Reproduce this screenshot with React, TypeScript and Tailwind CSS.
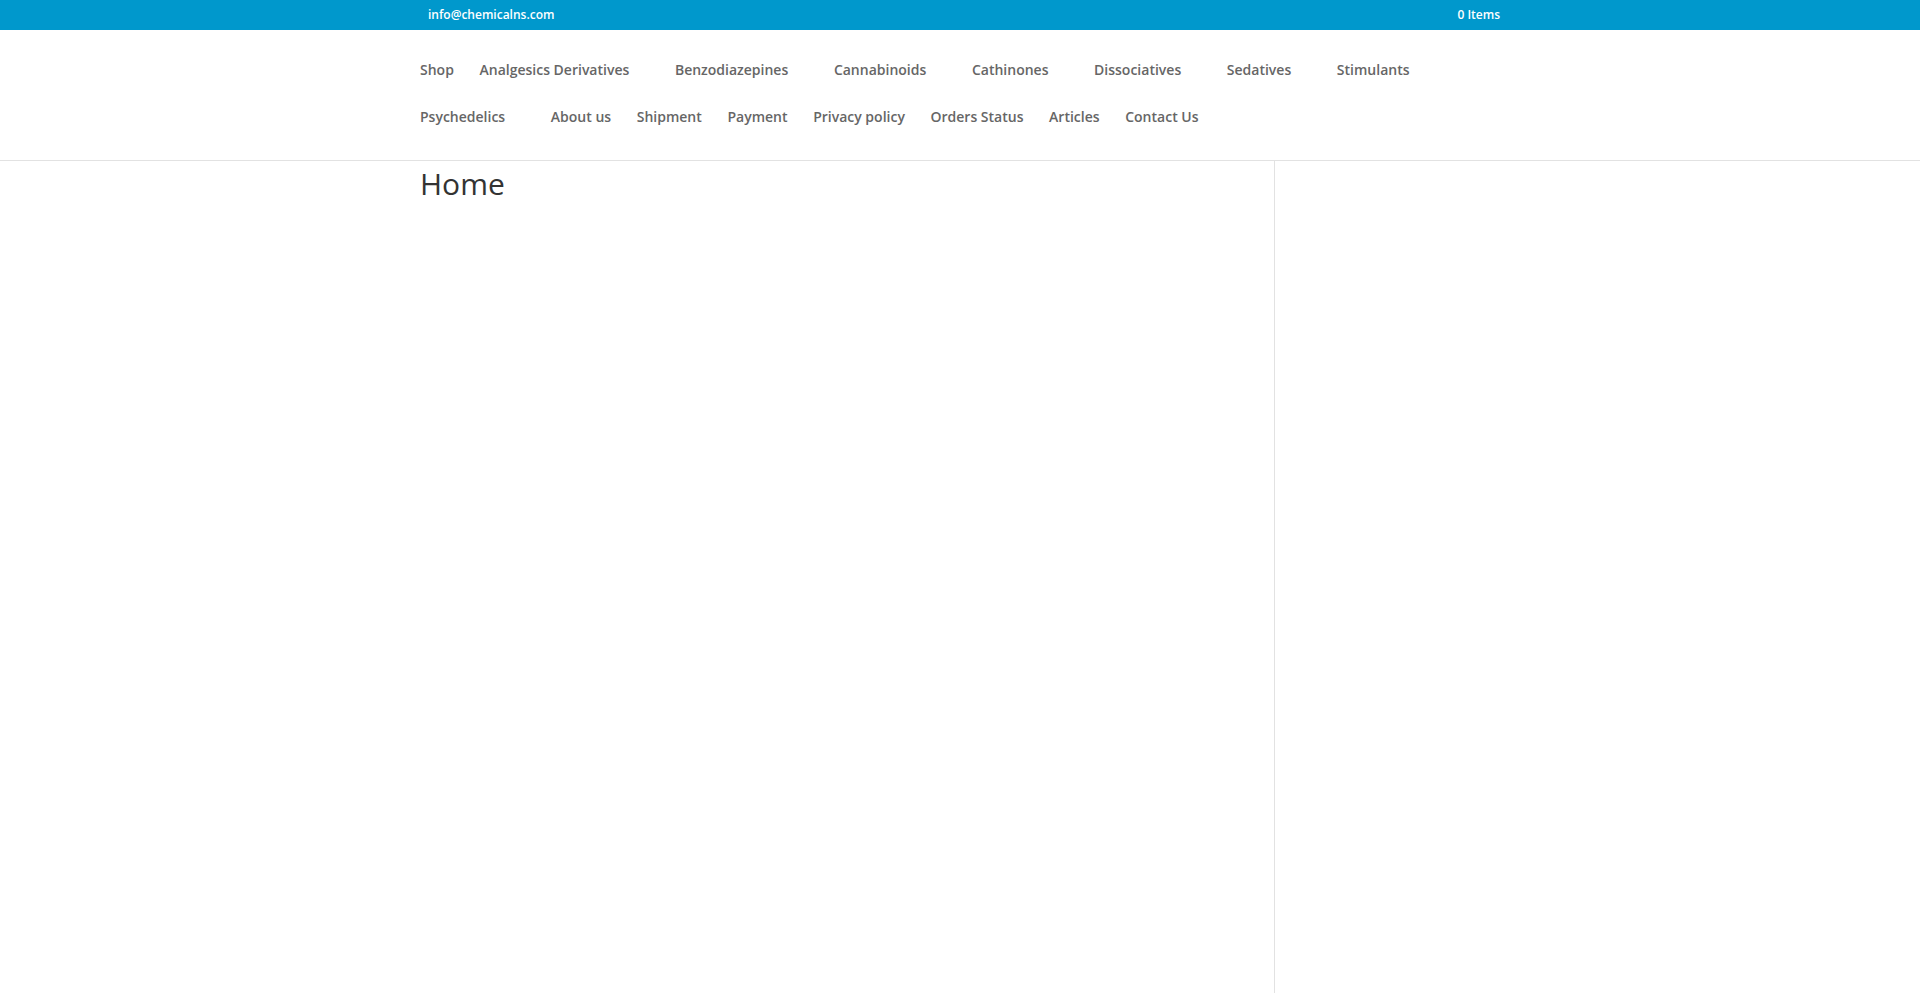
const font = "font-['Open_Sans',sans-serif]";

const items: [string, boolean][] = [
  ["Shop", false],
  ["Analgesics Derivatives", true],
  ["Benzodiazepines", true],
  ["Cannabinoids", true],
  ["Cathinones", true],
  ["Dissociatives", true],
  ["Sedatives", true],
  ["Stimulants", false],
  ["Psychedelics", true],
  ["About us", false],
  ["Shipment", false],
  ["Payment", false],
  ["Privacy policy", false],
  ["Orders Status", false],
  ["Articles", false],
  ["Contact Us", false],
];

export default function App() {
  return (
    <div className={`${font} flex h-[993px] flex-col overflow-hidden bg-white`}>
      <div className="h-[30px] shrink-0 bg-[#0098cc] text-[12px] font-semibold leading-[29px] text-white">
        <div className="mx-auto flex w-[1080px] justify-between">
          <a className="pl-[8px]">info@chemicalns.com</a>
          <a>0 Items</a>
        </div>
      </div>
      <header className="h-[131px] shrink-0 border-b border-[#e2e2e2] pt-[16px]">
        <ul className="mx-auto flex w-[1080px] flex-wrap">
          {items.map(([label, dropdown]) => (
            <li
              key={label}
              className={`h-[47px] text-[14px] font-semibold leading-[48px] text-[#666666] ${
                dropdown ? "pr-[45.64px]" : "pr-[25.64px]"
              }`}
            >
              <a>{label}</a>
            </li>
          ))}
        </ul>
      </header>
      <main className="mx-auto flex w-[1080px] flex-1">
        <div className="w-[855px] shrink-0 border-r border-[#e2e2e2]">
          <h1 className="text-[30px] font-normal leading-[46px] text-[#333333]">Home</h1>
        </div>
      </main>
    </div>
  );
}
